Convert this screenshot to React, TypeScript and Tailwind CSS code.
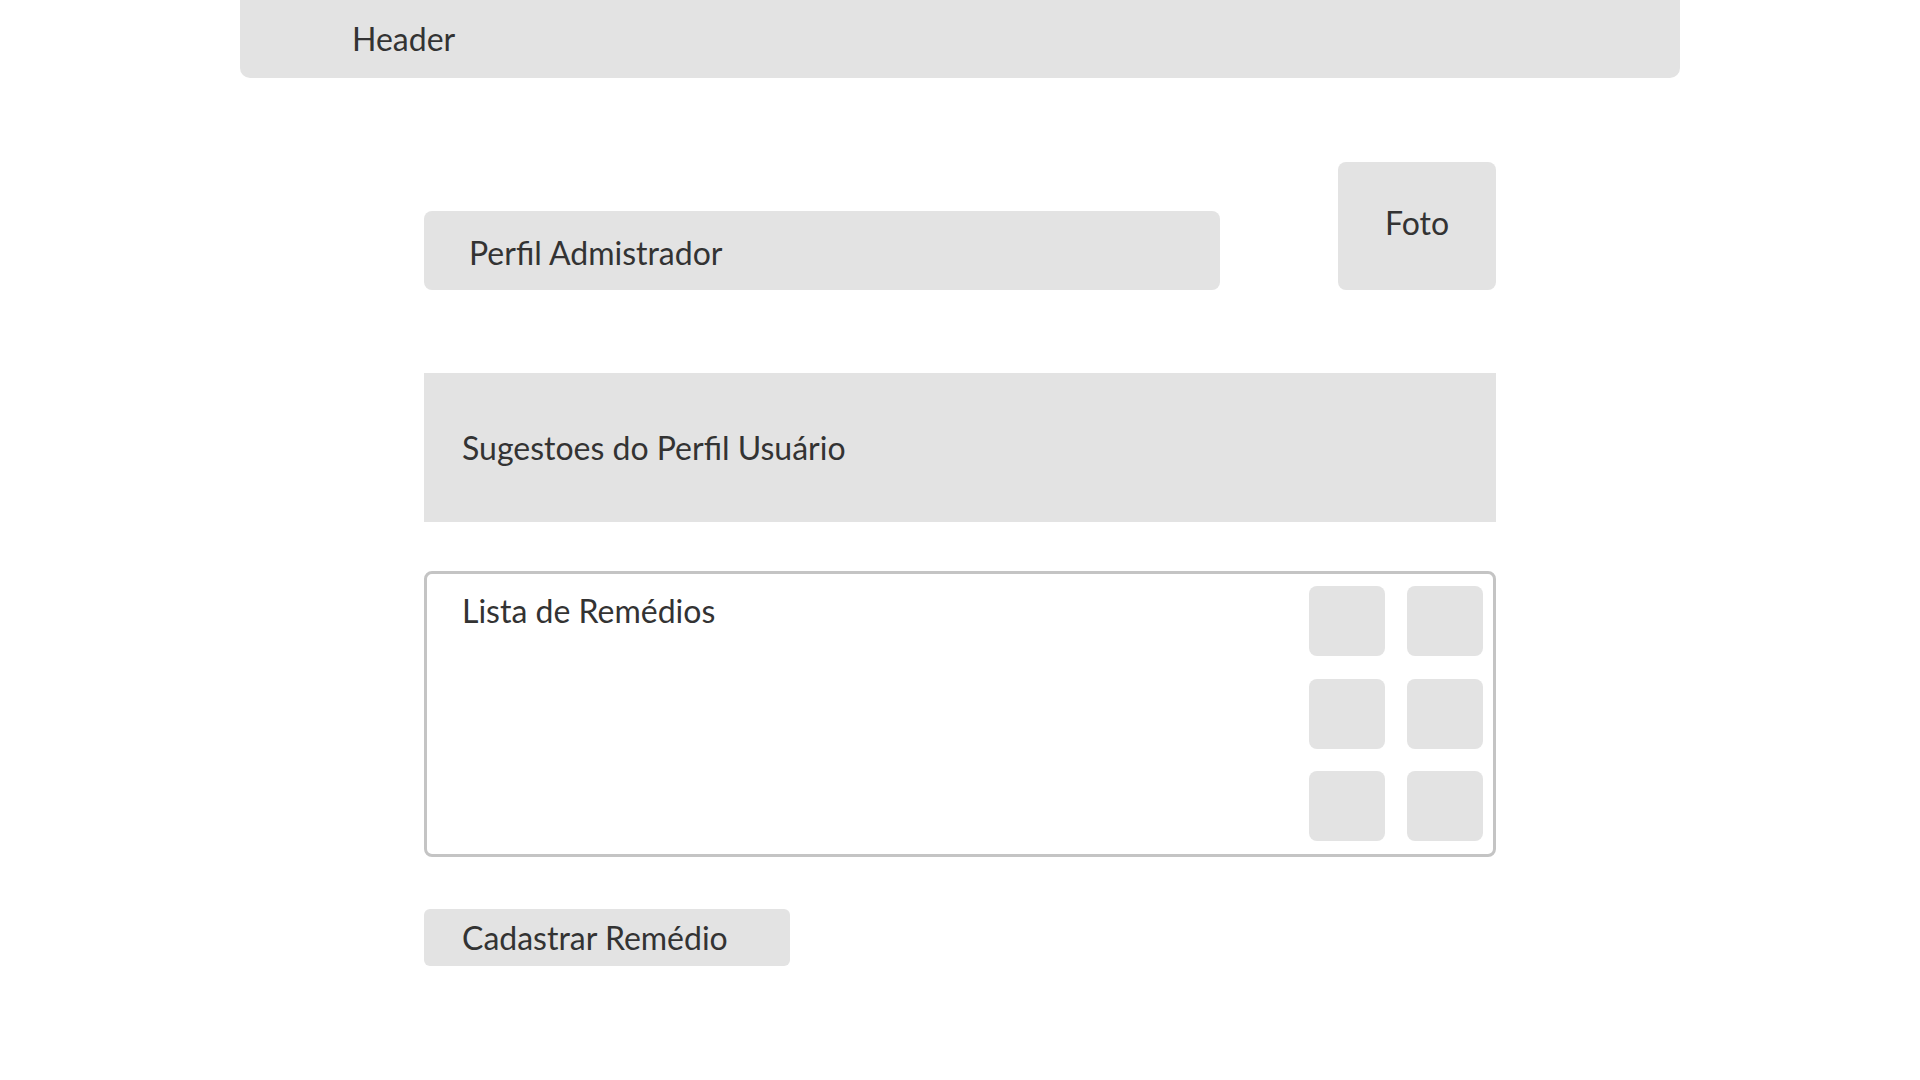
const font = { fontFamily: "Lato, 'Noto Sans', sans-serif" };

const boxes = [0, 1, 2, 3, 4, 5];

export default function App() {
  return (
    <div className="min-h-screen w-full bg-white text-[32px] leading-[38px] text-[#333333]" style={font}>
      <header className="mx-auto flex h-[78px] w-[1440px] items-center rounded-b-[10px] bg-[#e3e3e3] pl-[112px]">
        <span>Header</span>
      </header>

      <main className="mx-auto flex w-[1072px] flex-col pt-[84px]">
        <div className="flex items-end justify-between">
          <div className="flex h-[79px] w-[796px] items-center rounded-[8px] bg-[#e3e3e3] pl-[45px] pt-[5px]">
            Perfil Admistrador
          </div>
          <div className="flex h-[128px] w-[158px] items-center justify-center rounded-[8px] bg-[#e3e3e3] pb-[6px]">
            Foto
          </div>
        </div>

        <div className="mt-[83px] flex h-[149px] items-center bg-[#e3e3e3] pl-[38px]">
          Sugestoes do Perfil Usuário
        </div>

        <div className="mt-[49px] flex h-[286px] justify-between rounded-[8px] border-[3px] border-[#c4c4c4] pb-[12px] pl-[35px] pr-[10px] pt-[12px]">
          <span className="pt-[6px]">Lista de Remédios</span>
          <div className="grid grid-cols-2 gap-x-[22px] gap-y-[22px]">
            {boxes.map((b) => (
              <div key={b} className="h-[70px] w-[76px] rounded-[8px] bg-[#e3e3e3]" />
            ))}
          </div>
        </div>

        <button className="mt-[52px] flex h-[57px] w-[366px] items-center rounded-[6px] bg-[#e3e3e3] pl-[38px]">
          Cadastrar Remédio
        </button>
      </main>
    </div>
  );
}
